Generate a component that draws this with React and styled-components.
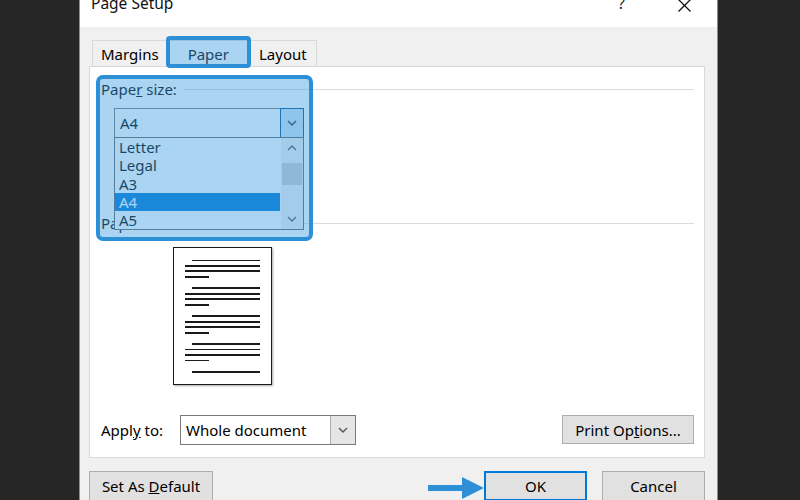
import React from "react";
import styled, { createGlobalStyle } from "styled-components";

const Global = createGlobalStyle`
  html, body { margin: 0; padding: 0; background: #262626; overflow: hidden; }
  * { box-sizing: border-box; }
  body { font-family: "Noto Sans", "Open Sans", sans-serif; font-size: 15px; color: #000; }
`;

const Page = styled.div`
  width: 800px;
  height: 500px;
  display: flex;
  padding-left: 79px;
  background: #262626;
`;

const Dialog = styled.div`
  width: 639px;
  height: 500px;
  display: flex;
  flex-direction: column;
  background: #f0f0f0;
  border-left: 1px solid #4d9fd9;
  border-right: 1px solid #4d9fd9;
  overflow: hidden;
`;

const TitleBar = styled.div`
  height: 27px;
  flex: none;
  background: #fff;
  display: flex;
  align-items: flex-start;
  padding-left: 11px;
  padding-right: 26px;
`;

const Title = styled.div`
  line-height: 15px;
  margin-top: -4px;
  font-size: 15.5px;
  color: #111;
  flex: 1;
`;

const Help = styled.div`
  line-height: 15px;
  margin-top: -4px;
  font-size: 16px;
  color: #222;
  width: 60px;
`;

const Body = styled.div`
  flex: 1;
  display: flex;
  flex-direction: column;
  padding: 0 12px 0 9px;
`;

const TabRow = styled.div`
  height: 39px;
  display: flex;
  align-items: flex-end;
  padding-left: 4px;
`;

const Tab = styled.div`
  position: relative;
  height: 26px;
  padding: 0 ${(p) => p.$pad}px;
  display: flex;
  align-items: center;
  background: ${(p) => (p.$active ? "#fff" : "#f0f0f0")};
  border: 1px solid #d9d9d9;
  border-bottom: none;
  margin-left: -1px;
  color: #000;
`;

const Highlight = styled.div`
  position: absolute;
  border: 4px solid #2d8fd6;
  background: rgba(61, 157, 224, 0.44);
  border-radius: ${(p) => p.$r || 7}px;
  pointer-events: none;
  z-index: 5;
`;

const Panel = styled.div`
  position: relative;
  height: 392px;
  background: #fff;
  border: 1px solid #d9d9d9;
  display: flex;
  flex-direction: column;
  padding: 12px 10px 13px 11px;
`;

const GroupHeader = styled.div`
  height: 20px;
  display: flex;
  align-items: center;
  gap: 7px;
  &::after {
    content: "";
    flex: 1;
    height: 1px;
    background: #dcdcdc;
  }
`;

const ComboWrap = styled.div`
  position: relative;
  width: 190px;
  margin: 9px 0 0 13px;
  z-index: 2;
`;

const Combo = styled.div`
  height: 30px;
  display: flex;
  border: 1px solid #7a7a7a;
  background: #fff;
  width: ${(p) => p.$w || 190}px;
`;

const ComboText = styled.div`
  flex: 1;
  display: flex;
  align-items: center;
  padding-left: 5px;
`;

const ComboButton = styled.div`
  width: ${(p) => p.$w || 24}px;
  display: flex;
  align-items: center;
  justify-content: center;
  background: ${(p) => (p.$open ? "#cce4f7" : "#e5e5e5")};
  border-left: 1px solid ${(p) => (p.$open ? "#005499" : "#acacac")};
  ${(p) => p.$open && "border: 1px solid #005499; margin: -1px -1px -1px 0;"}
`;

const List = styled.div`
  position: absolute;
  left: 0;
  top: 29px;
  width: 190px;
  height: 93px;
  border: 1px solid #646464;
  background: #fff;
  display: flex;
`;

const Items = styled.div`
  flex: 1;
`;

const Item = styled.div`
  height: 18.3px;
  line-height: 18px;
  padding-left: 4px;
  margin-right: 1px;
  background: ${(p) => (p.$sel ? "#0078d7" : "transparent")};
  color: ${(p) => (p.$sel ? "#fff" : "#000")};
  font-size: 15px;
`;

const ScrollBar = styled.div`
  width: 22px;
  background: #f0f0f0;
  display: flex;
  flex-direction: column;
  align-items: stretch;
`;

const ScrollArrow = styled.div`
  height: 20px;
  display: flex;
  align-items: center;
  justify-content: center;
`;

const Thumb = styled.div`
  height: 22px;
  margin: 5px 1px 0 1px;
  background: #cdcdcd;
`;

const SourceHeader = styled(GroupHeader)`
  margin-top: 75px;
`;

const Preview = styled.div`
  margin: 14px 0 0 72px;
  width: 99px;
  height: 138px;
  flex: none;
  border: 1.5px solid #1a1a1a;
  box-shadow: 1px 1px 2px rgba(0, 0, 0, 0.35);
  background: #fff;
  display: flex;
  flex-direction: column;
  padding: 11.5px 11px 0 11px;
`;

const TextLine = styled.div`
  flex: none;
  height: 1.7px;
  background: #1a1a1a;
  margin-left: ${(p) => p.$indent || 0}px;
  width: ${(p) => p.$w}px;
  margin-top: ${(p) => p.$gap}px;
`;

const ApplyRow = styled.div`
  margin-top: auto;
  display: flex;
  align-items: center;
  height: 29px;
`;

const ApplyLabel = styled.div`
  width: 79px;
`;

const Button = styled.div`
  height: ${(p) => p.$h || 30}px;
  width: ${(p) => p.$w}px;
  display: flex;
  align-items: center;
  justify-content: center;
  background: #e1e1e1;
  border: ${(p) => (p.$default ? "2px solid #0078d7" : "1px solid #adadad")};
  color: #000;
`;

const Spacer = styled.div`
  flex: 1;
`;

const Footer = styled.div`
  margin-top: 13px;
  display: flex;
  align-items: flex-start;
  gap: 15px;
  position: relative;
`;

const Arrow = styled.svg`
  position: absolute;
  left: 339px;
  top: 6px;
`;

const Chevron = ({ dir = "down", color = "#444", w = 10 }) => (
  <svg width={w} height={6} viewBox="0 0 10 6">
    <polyline
      points={dir === "down" ? "1,1 5,5 9,1" : "1,5 5,1 9,5"}
      fill="none"
      stroke={color}
      strokeWidth="1.4"
    />
  </svg>
);

const lines = [];
[0, 1, 2, 3].forEach((g) => {
  lines.push({ indent: 7, w: 68, gap: g === 0 ? 0 : 9.8 });
  lines.push({ indent: 0, w: 75, gap: 3.8 });
  lines.push({ indent: 0, w: 75, gap: 3.8 });
  lines.push({ indent: 0, w: 24, gap: 3.8 });
});
lines.push({ indent: 7, w: 68, gap: 9.8 });

export default function App() {
  return (
    <>
      <Global />
      <Page>
        <Dialog>
          <TitleBar>
            <Title>Page Setup</Title>
            <Help>?</Help>
            <svg width="13" height="13" viewBox="0 0 13 13" style={{ marginTop: -1 }}>
              <path d="M0.5 0.5 L12.5 12.5 M12.5 0.5 L0.5 12.5" stroke="#111" strokeWidth="1.3" />
            </svg>
          </TitleBar>
          <Body>
            <TabRow>
              <Tab $pad={8}>Margins</Tab>
              <Tab $pad={20} $active>
                Paper
                <Highlight $r={4} style={{ left: -2, top: -5, right: -2, bottom: -2 }} />
              </Tab>
              <Tab $pad={9}>Layout</Tab>
            </TabRow>
            <Panel>
              <Highlight style={{ left: 6, top: 8, width: 217, height: 166 }} />
              <GroupHeader>
                <span>
                  Pape<u>r</u> size:
                </span>
              </GroupHeader>
              <ComboWrap>
                <Combo>
                  <ComboText>A4</ComboText>
                  <ComboButton $open>
                    <Chevron color="#333" />
                  </ComboButton>
                </Combo>
                <List>
                  <Items>
                    <Item>Letter</Item>
                    <Item>Legal</Item>
                    <Item>A3</Item>
                    <Item $sel>A4</Item>
                    <Item>A5</Item>
                  </Items>
                  <ScrollBar>
                    <ScrollArrow>
                      <Chevron dir="up" color="#555" />
                    </ScrollArrow>
                    <Thumb />
                    <Spacer />
                    <ScrollArrow>
                      <Chevron color="#555" />
                    </ScrollArrow>
                  </ScrollBar>
                </List>
              </ComboWrap>
              <SourceHeader>
                <span>Paper source:</span>
              </SourceHeader>
              <Preview>
                {lines.map((l, i) => (
                  <TextLine key={i} $indent={l.indent} $w={l.w} $gap={l.gap} />
                ))}
              </Preview>
              <ApplyRow>
                <ApplyLabel>
                  Appl<u>y</u> to:
                </ApplyLabel>
                <Combo $w={176}>
                  <ComboText>Whole document</ComboText>
                  <ComboButton $w={25}>
                    <Chevron color="#555" />
                  </ComboButton>
                </Combo>
                <Spacer />
                <Button $w={132} $h={29}>
                  Print Op<u>t</u>ions...
                </Button>
              </ApplyRow>
            </Panel>
            <Footer>
              <Button $w={124}>
                Set As&nbsp;<u>D</u>efault
              </Button>
              <Spacer />
              <Arrow width="56" height="22" viewBox="0 0 56 22">
                <rect x="0" y="8" width="36" height="6" fill="#2d8fd6" />
                <polygon points="34,0 56,11 34,22" fill="#2d8fd6" />
              </Arrow>
              <Button $w={103} $default>
                OK
              </Button>
              <Button $w={103}>Cancel</Button>
            </Footer>
          </Body>
        </Dialog>
      </Page>
    </>
  );
}
